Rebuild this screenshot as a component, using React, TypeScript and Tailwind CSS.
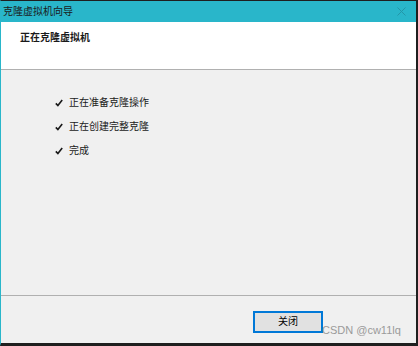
import type { ReactNode } from 'react'

const steps = ['正在准备克隆操作', '正在创建完整克隆', '完成']

function Check() {
  return (
    <svg width="8" height="8" viewBox="0 0 8 8" className="shrink-0" aria-hidden>
      <path d="M0.8 4.4 L2.9 6.6 L7.2 1" fill="none" stroke="#1a1a1a" strokeWidth="1.6" />
    </svg>
  )
}

function Row({ children }: { children: ReactNode }) {
  return (
    <div className="flex h-[24px] items-center gap-[6px]">
      <Check />
      <span>{children}</span>
    </div>
  )
}

export default function App() {
  return (
    <div
      className="relative flex h-[346px] w-[418px] flex-col border-b-[3px] border-l border-r-[2px] border-t border-[#1f1f1f] border-l-[#29b6ca] text-[10px] leading-[14px] text-[#1a1a1a]"
      style={{ fontFamily: '"Liberation Sans", "Noto Sans CJK SC", sans-serif' }}
    >
      {/* 标题栏 */}
      <div className="flex h-[21px] shrink-0 items-center justify-between bg-[#29b6ca] pl-[2px] pr-[10px]">
        <span>克隆虚拟机向导</span>
        <svg width="9" height="9" viewBox="0 0 9 9" aria-hidden>
          <path d="M0.5 0.5 L8.5 8.5 M8.5 0.5 L0.5 8.5" stroke="#2396a8" strokeWidth="1" />
        </svg>
      </div>

      {/* 页头 */}
      <div className="h-[48px] shrink-0 border-b border-b-[#b0b0b0] bg-white pl-[19px] pt-[9px] font-bold">
        正在克隆虚拟机
      </div>

      {/* 步骤 */}
      <div className="flex-1 bg-[#f0f0f0] pl-[54px] pt-[21px]">
        {steps.map((s) => (
          <Row key={s}>{s}</Row>
        ))}
      </div>

      {/* 底部按钮 */}
      <div className="h-[48px] shrink-0 border-t border-t-[#b0b0b0] bg-[#f0f0f0]">
        <div className="flex justify-end pr-[93px] pt-[15px]">
          <button
            type="button"
            className="flex h-[22px] w-[70px] items-center justify-center border-2 border-[#0078d7] bg-[#e1e1e1] text-[10px] text-black"
          >
            关闭
          </button>
        </div>
      </div>

      <span className="pointer-events-none absolute left-[321px] top-[322px] text-[11px] leading-[14px] text-[#9a9a9a]">
        CSDN @cw11lq
      </span>
    </div>
  )
}
